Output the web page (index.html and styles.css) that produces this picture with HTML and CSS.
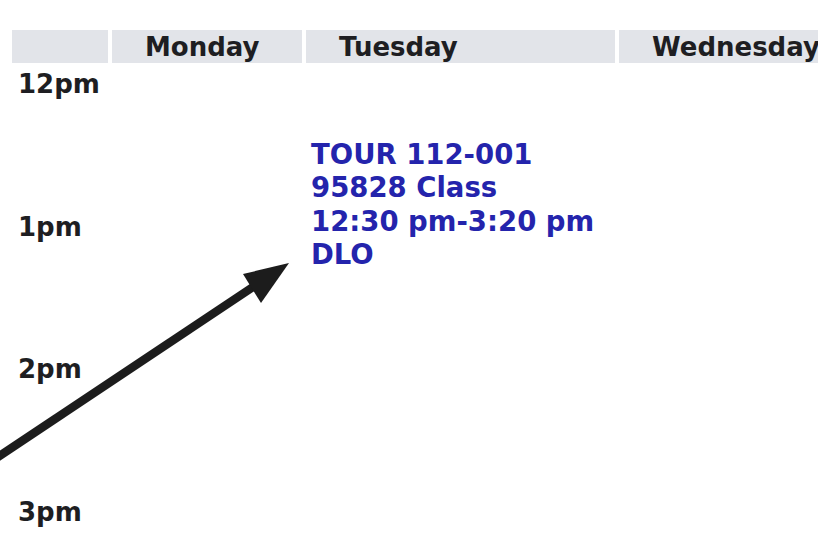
FILE: index.html
```html
<!DOCTYPE html>
<html>
<head>
<meta charset="utf-8">
<link rel="stylesheet" href="styles.css">
</head>
<body>
<div class="page">
  <div class="schedule">
    <div class="head blank"></div>
    <div class="head">Monday</div>
    <div class="head">Tuesday</div>
    <div class="head">Wednesday</div>

    <div class="time t12">12pm</div>
    <div class="time t1">1pm</div>
    <div class="time t2">2pm</div>
    <div class="time t3">3pm</div>

    <div class="event">
      <div>TOUR 112-001</div>
      <div>95828 Class</div>
      <div>12:30 pm-3:20 pm</div>
      <div>DLO</div>
    </div>
  </div>
  <svg class="arrow" width="818" height="544" viewBox="0 0 818 544">
    <line x1="-20" y1="469" x2="256" y2="285" stroke="#1c1c1c" stroke-width="8.5"/>
    <polygon points="289,263 243,274 261,303" fill="#1c1c1c"/>
  </svg>
</div>
</body>
</html>
```
FILE: styles.css
```css
html, body {
  margin: 0;
  padding: 0;
  background: #ffffff;
}
.page {
  position: relative;
  width: 818px;
  height: 544px;
  overflow: hidden;
}
.schedule {
  display: grid;
  grid-template-columns: 96px 190px 309px 260px;
  grid-template-rows: 33px repeat(8, 71.25px);
  column-gap: 4px;
  padding: 30px 0 0 12px;
  font-family: "DejaVu Sans", Verdana, sans-serif;
  font-weight: bold;
  font-size: 26px;
  line-height: 33px;
  color: #1e1e22;
  width: 900px;
}
.head {
  background: #e2e4e9;
  padding: 2px 0 0 33px;
  line-height: 31px;
  white-space: nowrap;
}
.head.blank {
  padding: 0;
}
.time {
  grid-column: 1;
  grid-row: span 2;
  padding: 5px 0 0 6px;
}
.t12 { grid-row: 2 / span 2; }
.t1 { grid-row: 4 / span 2; }
.t2 { grid-row: 6 / span 2; }
.t3 { grid-row: 8 / span 2; }
.event {
  grid-column: 3;
  grid-row: 3 / span 6;
  padding: 4px 0 0 5px;
  color: #2424ac;
  font-size: 27.5px;
  line-height: 33.2px;
  white-space: nowrap;
}
.arrow {
  position: absolute;
  left: 0;
  top: 0;
}
```
